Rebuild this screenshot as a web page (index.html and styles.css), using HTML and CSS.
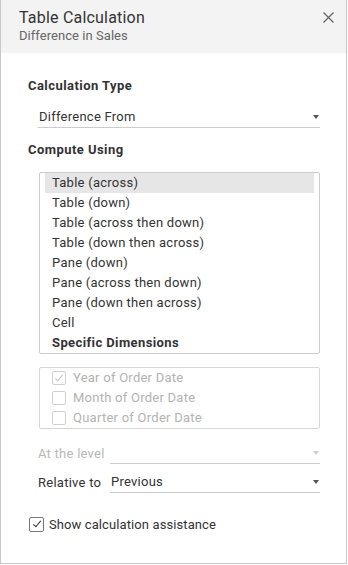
FILE: index.html
```html
<!DOCTYPE html>
<html lang="en">
<head>
<meta charset="UTF-8" />
<title>Table Calculation</title>
<link rel="stylesheet" href="styles.css">
</head>
<body>
<div class="panel">
  <div class="panel-head">
    <div class="head-text">
      <div class="title">Table Calculation</div>
      <div class="subtitle">Difference in Sales</div>
    </div>
    <svg class="close" width="11" height="11" viewBox="0 0 11 11">
      <path d="M0.5 0.5 L10.5 10.5 M10.5 0.5 L0.5 10.5" stroke="#666" stroke-width="1.3" fill="none" />
    </svg>
  </div>

  <div class="panel-body">
    <h3 class="section">Calculation Type</h3>
    <div class="select calc-type">
      <span>Difference From</span>
      <span class="caret"></span>
    </div>

    <h3 class="section compute">Compute Using</h3>
    <ul class="listbox">
      <li class="selected">Table (across)</li>
      <li>Table (down)</li>
      <li>Table (across then down)</li>
      <li>Table (down then across)</li>
      <li>Pane (down)</li>
      <li>Pane (across then down)</li>
      <li>Pane (down then across)</li>
      <li>Cell</li>
      <li class="strong">Specific Dimensions</li>
    </ul>

    <div class="dims">
      <label class="dim"><span class="box checked"></span>Year of Order Date</label>
      <label class="dim"><span class="box"></span>Month of Order Date</label>
      <label class="dim"><span class="box"></span>Quarter of Order Date</label>
    </div>

    <div class="field-row disabled">
      <span class="field-label">At the level</span>
      <div class="select inline"><span></span><span class="caret"></span></div>
    </div>
    <div class="field-row relative">
      <span class="field-label">Relative to</span>
      <div class="select inline"><span>Previous</span><span class="caret"></span></div>
    </div>

    <label class="assist"><span class="box on"></span>Show calculation assistance</label>
  </div>
</div>
</body>
</html>
```

FILE: styles.css
```css
* { box-sizing: border-box; }
body {
  margin: 0;
  background: #fff;
  font-family: Roboto, "Liberation Sans", sans-serif;
  font-size: 13px;
  letter-spacing: 0.25px;
  color: #333;
}
.panel {
  width: 347px;
  height: 564px;
  border: 1px solid #c8c8c8;
  border-top: none;
  background: #fff;
}

/* Header */
.panel-head {
  height: 53px;
  background: #f3f3f3;
  display: flex;
  justify-content: space-between;
  align-items: flex-start;
  padding: 8px 12px 0 18px;
}
.title {
  font-size: 16px;
  line-height: 20px;
  letter-spacing: 0.2px;
  color: #333;
}
.subtitle {
  font-size: 13px;
  line-height: 16px;
  letter-spacing: 0.05px;
  color: #666;
}
.close { margin-top: 4px; }

/* Body */
.panel-body {
  padding: 25px 26px 0 27px;
}
.section {
  margin: 0;
  font-size: 13px;
  line-height: 16px;
  font-weight: bold;
  letter-spacing: 0.45px;
  color: #333;
}
.section.compute { margin-top: 14px; }

.select {
  display: flex;
  justify-content: space-between;
  align-items: center;
  height: 22px;
  line-height: 21px;
  border-bottom: 1px solid #ccc;
  padding: 0 1px 0 1px;
}
.calc-type { margin: 12px 0 0 10px; }
.caret {
  width: 0; height: 0;
  border-left: 3px solid transparent;
  border-right: 3px solid transparent;
  border-top: 4px solid #555;
}

.listbox {
  list-style: none;
  margin: 14px 0 0 11px;
  padding: 0 5px;
  border: 1px solid #ccc;
  border-radius: 2px;
}
.listbox li {
  height: 20px;
  line-height: 20px;
  padding-left: 7px;
}
.listbox li.selected { background: #e6e6e6; }
.listbox li.strong { font-weight: bold; letter-spacing: 0.4px; }

.dims {
  margin: 13px 0 0 11px;
  border: 1px solid #d6d6d6;
  border-radius: 2px;
  padding: 0 12px;
  color: #b3b3b3;
}
.dim {
  display: flex;
  align-items: center;
  height: 20px;
  line-height: 20px;
}
.box {
  width: 14px;
  height: 14px;
  border: 1px solid #d0d0d0;
  border-radius: 2px;
  margin-right: 7px;
  position: relative;
  flex: none;
}
.box.checked::after,
.box.on::after {
  content: "";
  position: absolute;
  left: 4px; top: 1px;
  width: 3px; height: 7px;
  border: solid #c4c4c4;
  border-width: 0 1.5px 1.5px 0;
  transform: rotate(40deg);
}

.field-row {
  display: flex;
  align-items: center;
  margin-left: 10px;
}
.field-row.disabled { margin-top: 13px; color: #b8b8b8; }
.field-row.disabled .caret { border-top-color: #ccc; }
.field-row.relative { margin-top: 7px; }
.field-label { width: 72px; }
.select.inline { flex: 1; }

.assist {
  display: flex;
  align-items: center;
  height: 20px;
  margin: 21px 0 0 1px;
  letter-spacing: 0.1px;
}
.assist .box {
  width: 15px;
  height: 15px;
  border-color: #777;
  margin-right: 5px;
}
.box.on::after {
  border-color: #333;
  left: 4.5px; top: 1.5px;
}
```
